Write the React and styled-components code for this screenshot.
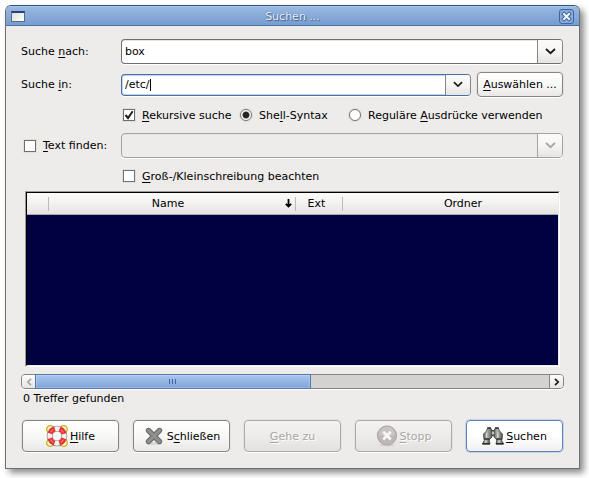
import React, { useState } from "react";
import styled, { createGlobalStyle, css } from "styled-components";

const Global = createGlobalStyle`
  * { box-sizing: border-box; }
  body { margin: 0; background: #fff; }
  body, button, input { font-family: "DejaVu Sans", Verdana, sans-serif; font-size: 11px; color: #000; }
  button, input { margin: 0; padding: 0; }
  u { text-decoration: underline; text-underline-offset: 2px; text-decoration-thickness: 1px; text-decoration-skip-ink: none; }
`;

const Window = styled.main`
  margin: 5px 9px 9px 5px;
  border: 1px solid #6c706f;
  border-top-color: #33517c;
  border-radius: 6px 6px 0 0;
  background: #edeceb;
  box-shadow: 4px 4px 6px rgba(0, 0, 0, 0.45);
  overflow: hidden;
`;

const TitleBar = styled.header`
  display: grid;
  grid-template-columns: 20px 1fr 20px;
  align-items: center;
  height: 20px;
  padding: 0 5px;
  border-top: 1px solid #a9c5ea;
  border-bottom: 1px solid #4a72ab;
  background: linear-gradient(#9ab8e2, #769dce);
`;

const Title = styled.h1`
  margin: 0;
  color: #f3f7fd;
  font-size: 11px;
  font-weight: 400;
  text-align: center;
  text-shadow: 1px 1px 1px #35598c, 0 0 1px #35598c;
`;

const WindowGlyph = styled.span`
  width: 14px;
  height: 11px;
  border: 1px solid #5b6b80;
  border-top: 2px solid #29456f;
  background: linear-gradient(135deg, #dedede, #fff);
`;

const CloseButton = styled.button`
  display: grid;
  place-items: center;
  width: 15px;
  height: 15px;
  justify-self: end;
  border: 1px solid #3d649b;
  border-radius: 3px;
  background: #88abd9;
`;

const Body = styled.form`
  padding: 13px 16px 16px 15px;
`;

const Fields = styled.div`
  display: grid;
  grid-template-columns: 92px 1fr;
  grid-template-rows: 25px 25px 20px 25px 20px;
  gap: 8px;
  align-items: center;
`;

const FieldLabel = styled.label`
  white-space: nowrap;
`;

const FieldLine = styled.div`
  display: flex;
  align-items: center;
  gap: 6px;
`;

const tones = {
  normal: "#6f6f6d",
  active: "#4a70a3",
  off: "#a3a29f",
};

const ComboFrame = styled.div`
  position: relative;
  display: flex;
  flex: 1;
  height: ${(p) => (p.$short ? 22 : 25)}px;
  border: 1px solid ${(p) => tones[p.$tone]};
  border-right-color: ${(p) => (p.$tone === "off" ? "#a3a29f" : "#858583")};
  border-radius: 4px;
  background: ${(p) => (p.$tone === "off" ? "#edeceb" : "#fff")};
  box-shadow: 0 1px 0 #fff, ${(p) => (p.$tone === "active" ? "inset 0 0 0 1px #c0d4ef" : "inset 0 1px 0 #e4e4e2")};
`;

const ComboInput = styled.input`
  flex: 1;
  min-width: 0;
  padding: 0 4px 0 3px;
  border: 0;
  outline: 0;
  background: transparent;
`;

const Caret = styled.span`
  position: absolute;
  top: 4px;
  bottom: 4px;
  left: 3px;
  border-right: 1px solid #000;
  color: transparent;
  pointer-events: none;
`;

const ComboArrow = styled.button`
  display: grid;
  place-items: center;
  width: 25px;
  border: 0;
  border-left: 1px solid ${(p) => (p.disabled ? "#a3a29f" : "#858583")};
  border-radius: 0 3px 3px 0;
  background: linear-gradient(#fbfbfb, #f5f5f4 50%, #e5e4e3);
`;

const PushButton = styled.button`
  display: flex;
  align-items: center;
  justify-content: center;
  gap: 2px;
  height: ${(p) => (p.$large ? 32 : 25)}px;
  ${(p) => !p.$large && css`width: 86px;`}
  border: 1px solid #858583;
  border-radius: 4px;
  background: linear-gradient(#fff, #f8f8f7 50%, #e9e8e7);
  box-shadow: 0 1px 0 #fff, 0 0 0 1px rgba(0, 0, 0, 0.04);
  white-space: nowrap;
  ${(p) => p.$primary && css`
    border-color: #5f83b7;
    background: linear-gradient(#fff, #fff 50%, #f0f0ef);
    box-shadow: 0 0 0 1px #c5d4e9;
  `}
  &:disabled {
    border-color: #adaba8;
    background: linear-gradient(#f3f2f1, #edeceb 50%, #e2e1e0);
    color: #a7a6a4;
    text-shadow: 1px 1px 0 #fff;
  }
`;

const Options = styled.div`
  display: grid;
  grid-template-columns: 117px 109px 1fr;
  padding-left: 2px;
`;

const OptionLabel = styled.label`
  display: flex;
  align-items: center;
  gap: 7px;
  padding-left: ${(p) => p.$indent || 0}px;
  white-space: nowrap;
`;

const CheckBox = styled.input.attrs({ type: "checkbox" })`
  appearance: none;
  flex: none;
  width: 12px;
  height: 12px;
  border: 1px solid #6f6f6d;
  background: #fff no-repeat center;
  box-shadow: 0 0 0 1px #e0dfdd;
  &:checked {
    background-image: url("data:image/svg+xml,%3Csvg xmlns='http://www.w3.org/2000/svg' width='10' height='10'%3E%3Cpath d='M1.5 5 4 8 8.7 1.2' fill='none' stroke='%23202020' stroke-width='2'/%3E%3C/svg%3E");
  }
`;

const Radio = styled.input.attrs({ type: "radio" })`
  appearance: none;
  flex: none;
  width: 12px;
  height: 12px;
  border: 1px solid #737371;
  border-radius: 50%;
  background: #fff;
  box-shadow: 0 0 0 1px #dddcda;
  &:checked { background: radial-gradient(circle, #222 0 2px, #333 3px, #fff 4px); }
`;

const ResultFrame = styled.div`
  margin: 5px 3px 0 4px;
  height: 176px;
  border: 1px solid #9c9a97;
  border-right-color: #fff;
  border-bottom-color: #fff;
  overflow: hidden;
`;

const ResultList = styled.div`
  height: 100%;
  border: 1px solid #000;
  border-right-color: #edeceb;
  border-bottom-color: #edeceb;
  background: #000040;
  overflow: hidden;
`;

const ResultTable = styled.table`
  width: calc(100% + 24px);
  table-layout: fixed;
  border-collapse: separate;
  border-spacing: 0;
`;

const HeadCell = styled.th`
  width: ${(p) => (p.$width ? `${p.$width}px` : "auto")};
  height: 22px;
  padding: 0 ${(p) => p.$inset || 0}px 0 0;
  border-bottom: 1px solid #aaa8a5;
  background:
    linear-gradient(#bdbbb8, #bdbbb8) right 1px center / 1px 14px no-repeat,
    linear-gradient(#fbfbfa, #f4f3f2 45%, #e5e4e2);
  font-weight: 400;
`;

const SortLabel = styled.span`
  display: grid;
  grid-template-columns: 1fr 7px;
  align-items: center;
  padding: 0 5px 0 1px;
`;

const ScrollBar = styled.div`
  display: grid;
  grid-template-columns: 13px 276fr 238fr 14px;
  height: 15px;
  margin: 7px -1px 0 0;
  border: 1px solid #858583;
  border-radius: 4px;
  background: #d3d2d0;
  box-shadow: 0 1px 0 #fff;
`;

const ScrollArrow = styled.button`
  display: grid;
  place-items: center;
  grid-column: ${(p) => (p.$end ? 4 : 1)};
  border: 0;
  border-left: ${(p) => (p.$end ? "1px solid #858583" : 0)};
  border-radius: ${(p) => (p.$end ? "0 3px 3px 0" : "3px 0 0 3px")};
  background: linear-gradient(#fcfcfc, #e6e5e4);
`;

const ScrollThumb = styled.div`
  display: grid;
  place-items: center;
  margin: -1px 0;
  border: 1px solid #5478ad;
  background: linear-gradient(#a9c6ed, #7fa4d8);
  box-shadow: inset 0 0 0 1px rgba(255, 255, 255, 0.2);
`;

const Status = styled.p`
  margin: 0;
  padding: 2px 2px 0;
  line-height: 16px;
`;

const Actions = styled.footer`
  display: grid;
  grid-template-columns: repeat(5, 1fr);
  gap: 14px;
  margin: 13px 0 0 1px;
`;

function Chevron({ color = "#1c1c1c", small = false }) {
  return (
    <svg width={small ? 10 : 11} height="7" viewBox="0 0 11 7" aria-hidden="true">
      <path d="M1 1 5.5 5.2 10 1" fill="none" stroke={color} strokeWidth="1.9" />
    </svg>
  );
}

function SideChevron({ color, right = false }) {
  return (
    <svg width="6" height="8" viewBox="0 0 6 8" aria-hidden="true">
      <path d={right ? "M1 .8 4.2 4 1 7.2" : "M5 .8 1.8 4 5 7.2"} fill="none" stroke={color} strokeWidth="1.7" />
    </svg>
  );
}

function LifeBuoy() {
  return (
    <svg width="22" height="22" viewBox="0 0 22 22" aria-hidden="true">
      <g fill="#fff8c9" stroke="#cfae20" strokeWidth="1.3">
        <circle cx="4.3" cy="4.3" r="3.6" />
        <circle cx="17.7" cy="4.3" r="3.6" />
        <circle cx="4.3" cy="17.7" r="3.6" />
        <circle cx="17.7" cy="17.7" r="3.6" />
      </g>
      <circle cx="11" cy="11" r="7.4" fill="#f6f6f5" stroke="#8d7771" strokeWidth="5.8" />
      <circle cx="11" cy="11" r="7.4" fill="none" stroke="#f3f2f0" strokeWidth="4.6" />
      <circle cx="11" cy="11" r="7.4" fill="none" stroke="#e93030" strokeWidth="4.8" strokeDasharray="6.8 4.824" strokeDashoffset="-2.41" />
      <circle cx="11" cy="11" r="7.4" fill="none" stroke="#ff7a72" strokeWidth="1.2" strokeDasharray="4 7.624" strokeDashoffset="-3.8" />
    </svg>
  );
}

function CrossIcon() {
  return (
    <svg width="22" height="22" viewBox="0 0 22 22" aria-hidden="true">
      <ellipse cx="11" cy="18.5" rx="8" ry="1.6" fill="#d9d8d6" />
      <path d="M5.5 5.5 16.5 16.5M16.5 5.5 5.5 16.5" stroke="#666965" strokeWidth="5.4" strokeLinecap="round" />
      <path d="M5.5 5.5 16.5 16.5M16.5 5.5 5.5 16.5" stroke="#8d908b" strokeWidth="3.4" strokeLinecap="round" />
    </svg>
  );
}

function StopIcon() {
  return (
    <svg width="22" height="22" viewBox="0 0 22 22" aria-hidden="true">
      <ellipse cx="11" cy="20" rx="8" ry="1.6" fill="#d6d5d3" />
      <circle cx="11" cy="10.5" r="9.6" fill="#bfb7b6" stroke="#aaa5a4" />
      <path d="M3 10a8 8 0 0 1 16 0Q11 13 3 10" fill="#cac4c3" />
      <path d="M7.2 6.8 14.8 14.4M14.8 6.8 7.2 14.4" stroke="#f7f6f5" strokeWidth="2.8" />
    </svg>
  );
}

function Binoculars() {
  return (
    <svg width="22" height="22" viewBox="0 0 22 22" aria-hidden="true">
      <defs>
        <linearGradient id="barrel">
          <stop offset="0" stopColor="#5d625e" />
          <stop offset=".4" stopColor="#b9beb8" />
          <stop offset="1" stopColor="#505551" />
        </linearGradient>
      </defs>
      <g fill="url(#barrel)" stroke="#383d39" strokeWidth=".8">
        <path d="M8.5 5.5h5v5h-5Z" />
        <path d="M5.500 3.500h3.500l1 2v6.500l-2.500 2.500H2L1.500 9l3-3Z" />
        <path d="M13 3.500h3.500l1 2.500 3 3-.5 5.500h-5.500L12 12V5.500Z" />
        <path d="M2.300 13.500h5v2.500l.7 3H.5l1.800-3.500Z" />
        <path d="M14.700 13.500h5v2l1.800 3.500H14l.7-3Z" />
      </g>
      <path d="M5.200 3h3.800M13 3h3.800M.3 18.800h7.700M14 18.800h7.700" stroke="#2a2f2b" strokeWidth="1.500" />
      <path d="M2.300 14.300h5M14.700 14.300h5" stroke="#343935" strokeWidth="1" />
      <circle cx="11" cy="8" r="1.300" fill="#c3c7c1" />
      <path d="M4.500 8v4.500M16 7.500v5M4 15.700v2M17 15.700v2" stroke="#d6dad4" strokeWidth="1" />
    </svg>
  );
}

function Combo({ id, tone = "normal", short, value, onChange, caret, disabled, label }) {
  return (
    <ComboFrame $tone={tone} $short={short}>
      <ComboInput id={id} value={value} onChange={(e) => onChange(e.target.value)} disabled={disabled} aria-label={label} />
      {caret && <Caret aria-hidden="true">{value}</Caret>}
      <ComboArrow type="button" disabled={disabled} aria-label="Liste öffnen">
        <Chevron color={disabled ? "#a8a7a4" : undefined} small={short} />
      </ComboArrow>
    </ComboFrame>
  );
}

export default function App() {
  const [term, setTerm] = useState("box");
  const [folder, setFolder] = useState("/etc/");
  const [text, setText] = useState("");

  return (
    <>
      <Global />
      <Window>
        <TitleBar>
          <WindowGlyph />
          <Title>Suchen ...</Title>
          <CloseButton type="button" aria-label="Fenster schließen">
            <svg width="11" height="11" viewBox="0 0 11 11" aria-hidden="true">
              <path d="m3 3 5 5m0-5-5 5" stroke="#3d649b" strokeWidth="4" strokeLinecap="square" />
              <path d="m3 3 5 5m0-5-5 5" stroke="#f2f6fc" strokeWidth="2" strokeLinecap="square" />
            </svg>
          </CloseButton>
        </TitleBar>
        <Body onSubmit={(e) => e.preventDefault()}>
          <Fields>
            <FieldLabel htmlFor="term">Suche <u>n</u>ach:</FieldLabel>
            <Combo id="term" value={term} onChange={setTerm} />

            <FieldLabel htmlFor="folder">Suche <u>i</u>n:</FieldLabel>
            <FieldLine>
              <Combo id="folder" tone="active" short caret value={folder} onChange={setFolder} />
              <PushButton type="button"><span><u>A</u>uswählen ...</span></PushButton>
            </FieldLine>

            <span />
            <Options>
              <OptionLabel><CheckBox defaultChecked /><span><u>R</u>ekursive suche</span></OptionLabel>
              <OptionLabel><Radio name="syntax" defaultChecked /><span>She<u>l</u>l-Syntax</span></OptionLabel>
              <OptionLabel><Radio name="syntax" /><span>Reguläre <u>A</u>usdrücke verwenden</span></OptionLabel>
            </Options>

            <OptionLabel $indent={3}><CheckBox /><span><u>T</u>ext finden:</span></OptionLabel>
            <Combo tone="off" disabled value={text} onChange={setText} label="Text finden" />

            <span />
            <OptionLabel $indent={2}><CheckBox /><span><u>G</u>roß-/Kleinschreibung beachten</span></OptionLabel>
          </Fields>

          <ResultFrame>
            <ResultList>
              <ResultTable>
                <thead>
                  <tr>
                    <HeadCell $width={23} />
                    <HeadCell $width={247}>
                      <SortLabel>
                        Name
                        <svg width="7" height="9" viewBox="0 0 7 9" aria-hidden="true">
                          <path d="M3.5 0v7M.8 4.8l2.7 2.7 2.7-2.7" fill="none" stroke="#000" strokeWidth="1.8" />
                        </svg>
                      </SortLabel>
                    </HeadCell>
                    <HeadCell $width={47} $inset={8}>Ext</HeadCell>
                    <HeadCell>Ordner</HeadCell>
                  </tr>
                </thead>
              </ResultTable>
            </ResultList>
          </ResultFrame>

          <ScrollBar>
            <ScrollArrow type="button" aria-label="Nach links"><SideChevron color="#a8a7a4" /></ScrollArrow>
            <ScrollThumb>
              <svg width="8" height="5" viewBox="0 0 8 5" aria-hidden="true">
                <path d="M.5 0v5M3.5 0v5M6.5 0v5" stroke="#3e66a0" />
              </svg>
            </ScrollThumb>
            <ScrollArrow type="button" $end aria-label="Nach rechts"><SideChevron color="#1c1c1c" right /></ScrollArrow>
          </ScrollBar>

          <Status>0 Treffer gefunden</Status>

          <Actions>
            <PushButton type="button" $large><LifeBuoy /><span><u>H</u>ilfe</span></PushButton>
            <PushButton type="button" $large><CrossIcon /><span>S<u>c</u>hließen</span></PushButton>
            <PushButton type="button" $large disabled><span><u>G</u>ehe zu</span></PushButton>
            <PushButton type="button" $large disabled><StopIcon /><span><u>S</u>topp</span></PushButton>
            <PushButton type="submit" $large $primary><Binoculars /><span><u>S</u>uchen</span></PushButton>
          </Actions>
        </Body>
      </Window>
    </>
  );
}
